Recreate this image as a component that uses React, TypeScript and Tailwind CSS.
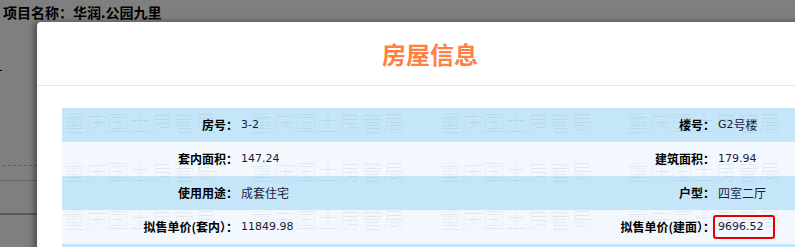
import React from "react";

const CJK = '"Noto Sans CJK SC", "Noto Sans", sans-serif';
const NUM = '"DejaVu Sans", "Noto Sans CJK SC", sans-serif';

function Num({ children }: { children: React.ReactNode }) {
  return <span className="text-[11px]" style={{ fontFamily: NUM }}>{children}</span>;
}
function Han({ children }: { children: React.ReactNode }) {
  return <span className="text-[12px]" style={{ fontFamily: CJK }}>{children}</span>;
}

type Cell = { label: string; value: React.ReactNode; boxed?: boolean };

const rows: { bg: string; cells: [Cell, Cell] }[] = [
  {
    bg: "bg-[#c5e6f9]",
    cells: [
      { label: "房号：", value: <Num>3-2</Num> },
      { label: "楼号：", value: <><Num>G2</Num><Han>号楼</Han></> },
    ],
  },
  {
    bg: "bg-[#f2f8fd]",
    cells: [
      { label: "套内面积：", value: <Num>147.24</Num> },
      { label: "建筑面积：", value: <Num>179.94</Num> },
    ],
  },
  {
    bg: "bg-[#c5e6f9]",
    cells: [
      { label: "使用用途：", value: <Han>成套住宅</Han> },
      { label: "户型：", value: <Han>四室二厅</Han> },
    ],
  },
  {
    bg: "bg-[#f2f8fd]",
    cells: [
      { label: "拟售单价(套内）：", value: <Num>11849.98</Num> },
      { label: "拟售单价(建面）：", value: <Num>9696.52</Num>, boxed: true },
    ],
  },
];

function Label({ text }: { text: string }) {
  return (
    <div
      className="flex items-center justify-end text-[12px] font-bold text-black"
      style={{ fontFamily: CJK }}
    >
      {text}
    </div>
  );
}

function Value({ cell }: { cell: Cell }) {
  return (
    <div className="relative flex items-center pl-[3px] text-[#1b1b3b]">
      {cell.value}
      {cell.boxed && (
        <div className="absolute left-[-2px] top-[5px] h-[24px] w-[62px] rounded-[3px] border-2 border-[#e60000]" />
      )}
    </div>
  );
}

export default function App() {
  const wmRows = [2, 51, 99, 148];
  const wmCols = [1, 189, 377, 565, 753];
  return (
    <div
      className="relative h-[247px] w-[795px] overflow-hidden bg-[#7f7f7f]"
      style={{ fontFamily: CJK }}
    >
      {/* page behind the dialog */}
      <div className="h-[22px] pl-[3px] pt-[4px] text-[14px] font-bold leading-[16px] text-black">
        项目名称：华润.公园九里
      </div>
      <div className="w-[37px]">
        <div className="mt-[48px] h-[1px] w-[2px] bg-black" />
        <div className="ml-[3px] mt-[94px] border-t border-dashed border-[#5e5e5e]" />
        <div className="mt-[14px] h-px bg-[#646464]" />
        <div className="mt-[32px] h-[2px] bg-[#585858]" />
      </div>

      {/* dialog */}
      <div className="absolute left-[37px] top-[22px] w-[786px] rounded-tl-[4px] bg-white shadow-[-3px_0_6px_rgba(0,0,0,0.4)]">
        <div className="flex h-[64px] items-center justify-center border-b border-[#e5e5e5]">
          <span className="text-[24px] font-bold leading-none text-[#ff8142]">房屋信息</span>
        </div>
        <div className="px-[25px] pt-[22px]">
          <div className="relative">
            {rows.map((r, i) => (
              <div key={i} className={`grid h-[34px] grid-cols-[176px_301px_176px_1fr] ${r.bg}`}>
                <Label text={r.cells[0].label} />
                <Value cell={r.cells[0]} />
                <Label text={r.cells[1].label} />
                <Value cell={r.cells[1]} />
              </div>
            ))}
            <div className="h-[34px] bg-[#c5e6f9]" />
            <div className="pointer-events-none absolute inset-0 overflow-hidden">
              {wmRows.map((t) =>
                wmCols.map((l) => (
                  <span
                    key={`${t}-${l}`}
                    className="absolute whitespace-nowrap text-[22px] font-light leading-[22px] text-black/[0.06]"
                    style={{ top: t, left: l }}
                  >
                    重庆国土房管局
                  </span>
                ))
              )}
            </div>
          </div>
        </div>
      </div>
    </div>
  );
}
